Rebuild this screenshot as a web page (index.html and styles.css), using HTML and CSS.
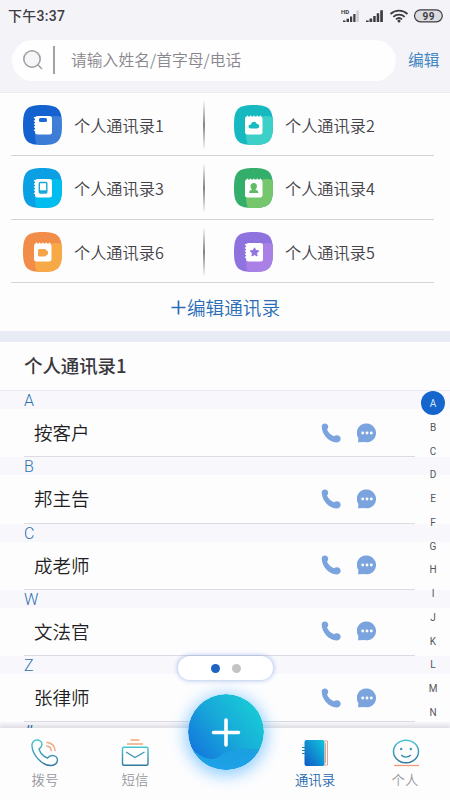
FILE: index.html
```html
<!DOCTYPE html>
<html lang="zh-CN">
<head>
<meta charset="utf-8">
<title>通讯录</title>
<link rel="stylesheet" href="styles.css">
</head>
<body>
<svg class="defs" width="0" height="0" aria-hidden="true">
  <defs>
    <clipPath id="tile"><path d="M19.5 0C35 0 39 4 39 20S35 40 19.5 40 0 36 0 20 4 0 19.5 0Z"/></clipPath>
    <linearGradient id="shade" x1="1" y1="0" x2="0" y2="1"><stop offset="0" stop-color="#fff" stop-opacity=".2"/><stop offset="1" stop-color="#fff" stop-opacity=".15"/></linearGradient>
    <linearGradient id="line" x1="0" y1="0" x2="0" y2="1"><stop offset="0" stop-color="#45c5cf"/><stop offset="1" stop-color="#32799f"/></linearGradient>
    <linearGradient id="book" x1="1" y1="0" x2="0" y2="1"><stop offset="0" stop-color="#11c6dc"/><stop offset="1" stop-color="#1059c6"/></linearGradient>
    <linearGradient id="fab" x1=".85" y1=".15" x2=".1" y2=".75"><stop offset="0" stop-color="#18c8d6"/><stop offset=".5" stop-color="#18a8d9"/><stop offset="1" stop-color="#147bdc"/></linearGradient>
    <linearGradient id="wave" x1="0" y1="0" x2="0" y2="1"><stop offset="0" stop-color="#1a9fdd"/><stop offset="1" stop-color="#1da3ea"/></linearGradient>
    <symbol id="side-book" viewBox="0 0 39 40">
      <rect x="12" y="11" width="17" height="18.5" rx="2.5" fill="#fff"/>
      <path d="M11.500 12.800h2M11.500 15.900h2M11.500 19h2M11.500 22.100h2M11.500 25.200h2" stroke="#fff" stroke-width="1.500" stroke-linecap="round"/>
    </symbol>
    <symbol id="top-book" viewBox="0 0 39 40">
      <rect x="11" y="11.5" width="17.5" height="18" rx="2.3" fill="#fff"/>
      <path d="M13.300 11.200v2M16.600 11.200v2M19.900 11.200v2M23.200 11.200v2M26.500 11.200v2" stroke="#fff" stroke-width="1.400" stroke-linecap="round"/>
    </symbol>
    <symbol id="phone" viewBox="0 0 20 20"><path d="M.7 3.600C.7 1.700 2.100.5 3.900.5c1.900 0 3.300 1.400 3.300 3.200 0 1.300-.7 2.100-1.200 2.900 1.100 2.700 3.700 5.400 6.900 6.700.9-.6 1.900-1 3.100-1 2.100 0 3.700 1.600 3.700 3.500 0 2.200-1.900 3.700-4.300 3.700C8 19.500.9 11.700.7 3.600Z"/></symbol>
    <symbol id="chat" viewBox="0 0 20 20"><path d="M10 .6a9.300 9.300 0 1 1-2.600 18.300l-5.600.4q-.8 0-.7-.8l.3-3.500A9.300 9.300 0 0 1 10 .6Z"/><g fill="#fff"><circle cx="5.700" cy="10" r="1.450"/><circle cx="10" cy="10" r="1.450"/><circle cx="14.300" cy="10" r="1.450"/></g></symbol>
  </defs>
</svg>
<div class="app">
  <header class="header">
    <div class="status">
      <span class="time">下午3:37</span>
      <svg class="signals" width="104" height="16" viewBox="0 0 104 16">
        <g fill="#3d3c42"><path d="M2 12.500h2.500V14H2zM5.500 10.800H8V14H5.500zM9 8.500h2.200V14H9zM12.300 6h2.200v8h-2.200z"/><path d="M15.500 2.500h2.200V14h-2.200z" fill="#c9c8cd"/><path d="M25 12.500h2.700V14H25zM28.500 10.500h2.700V14h-2.700zM32.200 8h2.500v6h-2.500zM35.700 5.300h2.500V14h-2.500zM39.200 2.300h2.700V14h-2.700z"/></g>
        <text x="0" y="5.500" class="hd">HD</text>
        <g fill="none" stroke="#3d3c42" stroke-width="1.800"><path d="M49.500 6a12.500 12.500 0 0 1 17 0M52.300 8.800a8.500 8.500 0 0 1 11.400 0M55 11.400a4.500 4.500 0 0 1 6 0"/></g><circle cx="58" cy="13" r="1.500" fill="#3d3c42"/>
        <rect x="73.500" y="1.800" width="27.800" height="12" rx="6" fill="#dcdbe0" stroke="#3d3c42" stroke-width="1.200"/>
        <text x="87.700" y="11.500" text-anchor="middle" class="battery">99</text>
      </svg>
    </div>
    <div class="search-row">
      <div class="search">
        <svg width="20" height="20" viewBox="0 0 20 20" fill="#f6f6f8" stroke="#a09fa3" stroke-width="1.600"><circle cx="9" cy="9" r="8.200"/><path d="M14.500 14.500l4.500 4.500"/></svg>
        <i class="bar"></i>
        <span>请输入姓名/首字母/电话</span>
      </div>
      <a class="edit">编辑</a>
    </div>
  </header>

  <section class="books">
    <div class="book-row">
      <div class="book"><svg class="tile" viewBox="0 0 39 40"><g clip-path="url(#tile)"><path fill="#1462cf" d="M0 0h39v40H0z"/><circle cx="32" cy="31" r="20" fill="url(#shade)"/></g><use href="#side-book"/><rect x="16" y="13" width="8" height="4" rx="1.500" fill="#1d68d2"/></svg><span>个人通讯录1</span></div>
      <i class="split"></i>
      <div class="book"><svg class="tile" viewBox="0 0 39 40"><g clip-path="url(#tile)"><path fill="#16b9bf" d="M0 0h39v40H0z"/><circle cx="32" cy="31" r="20" fill="#3cd0c8"/></g><use href="#top-book"/><path d="M17 23.500c-3.300 0-3.300-4 0-4.100.8-3.700 5.300-3.100 5.800-.5 3.200-.2 3.200 4.600.2 4.600Z" fill="#18bbc1"/></svg><span>个人通讯录2</span></div>
    </div>
    <div class="book-row">
      <div class="book"><svg class="tile" viewBox="0 0 39 40"><g clip-path="url(#tile)"><path fill="#0b9fe3" d="M0 0h39v40H0z"/><circle cx="32" cy="31" r="20" fill="#00bdf0"/></g><use href="#side-book"/><rect x="16.300" y="14.500" width="7.500" height="10.500" rx="1" fill="#fff" stroke="#13a9dd" stroke-width="1.400"/><path d="M16.500 22.300h7.200v2.500h-7.200z" fill="#13a9dd"/></svg><span>个人通讯录3</span></div>
      <i class="split"></i>
      <div class="book"><svg class="tile" viewBox="0 0 39 40"><g clip-path="url(#tile)"><path fill="#34af6b" d="M0 0h39v40H0z"/><circle cx="32" cy="31" r="20" fill="#75c66c"/></g><use href="#top-book"/><path d="M15 25c0-2.300 1.300-3 3-3.300-2.800-2.800-1.500-6.700 1.700-6.700s4.500 3.900 1.700 6.700c1.700.3 3 1 3 3.300Z" fill="#62bc66"/></svg><span>个人通讯录4</span></div>
    </div>
    <div class="book-row">
      <div class="book"><svg class="tile" viewBox="0 0 39 40"><g clip-path="url(#tile)"><path fill="#f28d49" d="M0 0h39v40H0z"/><circle cx="32" cy="31" r="20" fill="#f7a947"/></g><use href="#top-book"/><path d="M16.500 17h5.500l3 2.500v2.500l-3 2.500h-5.500q-1.500 0-1.500-1.500v-4.500q0-1.500 1.500-1.500Z" fill="#f5a448"/></svg><span>个人通讯录6</span></div>
      <i class="split"></i>
      <div class="book"><svg class="tile" viewBox="0 0 39 40"><g clip-path="url(#tile)"><path fill="#8e73df" d="M0 0h39v40H0z"/><circle cx="32" cy="31" r="20" fill="#a980e5"/></g><use href="#side-book"/><path d="M20.500 15.800l1.300 2.700 3 .4-2.200 2.100.5 3-2.600-1.400-2.600 1.400.5-3-2.200-2.100 3-.4Z" fill="#9274df" stroke="#9274df" stroke-linejoin="round"/></svg><span>个人通讯录5</span></div>
    </div>
    <a class="manage"><svg width="15" height="15" viewBox="0 0 15 15" stroke="#2a6cb5" stroke-width="1.700"><path d="M7.500 .5v14M.5 7.500h14"/></svg><span>编辑通讯录</span></a>
  </section>

  <main class="contacts">
    <h1>个人通讯录1</h1>
    <div class="list">
      <div class="group"><div class="letter">A</div><div class="contact"><span>按客户</span><svg><use href="#phone"/></svg><svg><use href="#chat"/></svg></div></div>
      <div class="group"><div class="letter">B</div><div class="contact"><span>邦主告</span><svg><use href="#phone"/></svg><svg><use href="#chat"/></svg></div></div>
      <div class="group"><div class="letter">C</div><div class="contact"><span>成老师</span><svg><use href="#phone"/></svg><svg><use href="#chat"/></svg></div></div>
      <div class="group"><div class="letter">W</div><div class="contact"><span>文法官</span><svg><use href="#phone"/></svg><svg><use href="#chat"/></svg></div></div>
      <div class="group"><div class="letter">Z</div><div class="contact"><span>张律师</span><svg><use href="#phone"/></svg><svg><use href="#chat"/></svg></div></div>
      <div class="group"><div class="letter last">#</div></div>
      <div class="index"><b>A</b><span>B</span><span>C</span><span>D</span><span>E</span><span>F</span><span>G</span><span>H</span><span>I</span><span>J</span><span>K</span><span>L</span><span>M</span><span>N</span></div>
    </div>
  </main>

  <nav class="tabs">
    <div class="pager"><i class="on"></i><i></i></div>
    <a class="tab"><svg width="30" height="30" viewBox="0 0 30 30" fill="none" stroke-linecap="round"><path d="M2 8C1.600 4.500 4 2 7 2c2.800 0 5 2 5 4.500S10 10 9 11c1.500 4.500 4.500 7.700 8.500 9 1.200-1.500 2.700-2.500 4.800-2.500 3 0 5.200 2 5.200 4.600 0 3.500-3.500 5.400-7 5.400C12 27.500 2.500 17 2 8Z" stroke="url(#line)" stroke-width="1.400"/><path d="M17 4.500c4.500.4 7.700 3.500 8 8M16.800 8c2.700.3 4.200 2 4.500 4.500" stroke="#efab83" stroke-width="1.500"/></svg><span>拨号</span></a>
    <a class="tab"><svg width="30" height="30" viewBox="0 0 30 30" fill="none"><path d="M10.500 2h9M7 6h16" stroke="#efa878" stroke-width="1.300"/><rect x="2.500" y="9.200" width="25.500" height="18" rx="1.500" stroke="url(#line)" stroke-width="1.400"/><path d="M6 14l9 5.500 9.500-5.500" stroke="#3c96ad" stroke-width="1.300"/></svg><span>短信</span></a>
    <a class="tab"></a>
    <a class="tab active"><svg width="30" height="30" viewBox="0 0 30 30" fill="none"><path d="M24 3h3.500v24H24M25.500 5v20" stroke="#efa184" stroke-width="1"/><rect x="4.500" y="2" width="20" height="26" rx="2" fill="url(#book)"/><path d="M2 9.500h3.500M2 12.500h3.500M2 15.500h3.500" stroke="#228dab" stroke-width="1.200"/></svg><span>通讯录</span></a>
    <a class="tab"><svg width="30" height="30" viewBox="0 0 30 30" fill="none"><ellipse cx="16" cy="13.500" rx="12.500" ry="11.300" stroke="url(#line)" stroke-width="1.500"/><path d="M11.200 17c2.300 2.700 7.300 2.700 9.600 0" stroke="#3a8fae" stroke-width="1.300"/><circle cx="11.200" cy="11" r="1.200" fill="#3a9ab2"/><circle cx="20.800" cy="11" r="1.200" fill="#3a9ab2"/><path d="M4 27.500h25" stroke="#ee9d78" stroke-width="1.300"/></svg><span>个人</span></a>
    <svg class="fab" viewBox="0 0 76 76"><clipPath id="disc"><circle cx="38" cy="38" r="38"/></clipPath><g clip-path="url(#disc)"><path fill="url(#fab)" d="M0 0h76v76H0z"/><path d="M0 52c8 7 16 13 24 13 10-1 14-8 28-10 10-1 16 1 24 0v21H0Z" fill="url(#wave)"/><path d="M28 64c6-5 12-9 22-6 10 3 18 1 26-2v20H28Z" fill="#1d9fe6" opacity=".5"/></g><path d="M38 26v25M25.500 38.500h25" stroke="#fff" stroke-width="3.600" stroke-linecap="round"/></svg>
  </nav>
</div>
</body>
</html>
```
FILE: styles.css
```css
* { box-sizing: border-box; }
body {
  margin: 0;
  font-family: Roboto, "Noto Sans CJK SC", sans-serif;
  background: #fdfdfe;
}
.defs { position: absolute; }
.app {
  position: relative;
  width: 450px;
  height: 800px;
  display: flex;
  flex-direction: column;
  overflow: hidden;
}
i { font-style: normal; }

.header {
  height: 93px;
  flex: none;
  background: #f4f3f7;
  border-bottom: 1px solid #ebeaef;
}
.status {
  height: 40px;
  padding: 0 5px 9px 8px;
  display: flex;
  align-items: center;
  justify-content: space-between;
}
.time {
  font: 500 14px/20px Roboto, "Noto Sans CJK SC", sans-serif;
  color: #3d3c42;
  letter-spacing: .3px;
}
.hd { font: 700 6px Roboto, sans-serif; fill: #3d3c42; }
.battery { font: 700 10px Roboto, sans-serif; fill: #3d3c42; letter-spacing: .5px; }
.search-row { display: flex; align-items: center; padding-left: 12px; }
.search {
  width: 384px;
  height: 41px;
  border-radius: 21px;
  background: #fefefe;
  display: flex;
  align-items: center;
  padding: 0 0 1px 11px;
  font: 350 15.8px/24px "Noto Sans CJK SC", sans-serif;
  color: #89878d;
}
.search .bar { width: 1.5px; height: 28px; background: #a3a2a6; margin: 0 16.5px 0 10px; }
.edit { margin-left: 12px; padding-bottom: 1px; font: 400 15.7px/24px "Noto Sans CJK SC", sans-serif; color: #4387c2; }

.books { height: 238px; flex: none; padding-left: 11px; }
.book-row {
  width: 423px;
  height: 63.5px;
  padding-top: 1.5px;
  border-bottom: 1px solid #d5d3da;
  display: flex;
  align-items: center;
}
.book-row:first-child { height: 63px; }
.book {
  flex: none;
  display: flex;
  align-items: center;
  gap: 12px;
  width: 192px;
  padding-left: 12px;
  font: 350 16.2px/24px "Noto Sans CJK SC", sans-serif;
  color: #454348;
}
.tile { width: 39px; height: 40px; }
.split {
  width: 2px;
  height: 50px;
  margin-right: 17px;
  background: linear-gradient(#fdfdfe, #858388 50%, #fdfdfe);
}
.manage {
  height: 48px;
  padding-left: 6px;
  display: flex;
  width: 423px;
  align-items: center;
  justify-content: center;
  gap: 1px;
  font: 350 18.6px/24px "Noto Sans CJK SC", sans-serif;
  color: #2a6cb5;
}
.manage span { padding-bottom: 1px; }

.contacts {
  border-top: 11px solid #e8ebf4;
  flex: 1;
  min-height: 0;
}
h1 {
  height: 48px;
  margin: 0;
  padding-left: 24px;
  font: 500 18.5px/46px "Noto Sans CJK SC", sans-serif;
  letter-spacing: -.1px;
  color: #39383d;
}
.list { position: relative; border-top: 1px solid #ebeaf1; }
.group { height: 66.25px; }
.letter {
  height: 18px;
  padding-left: 24px;
  background: #f8f8fc;
  font-size: 16px;
  font-weight: 300;
  line-height: 19px;
  color: #2f70ae;
}
.letter.last { font-weight: 500; }
.contact {
  width: 391px;
  height: 48.25px;
  margin-left: 24px;
  padding: 0 38px 0 10px;
  border-bottom: 1px solid #dcdbe3;
  display: flex;
  align-items: center;
  gap: 16px;
  font: 350 18.5px/24px "Noto Sans CJK SC", sans-serif;
  color: #1f1e22;
}
.contact span { flex: 1; padding-bottom: 1px; }
.contact svg { width: 20px; height: 20px; fill: #7ba4df; }
.index {
  position: absolute;
  top: 0;
  right: 5px;
  width: 24px;
  display: grid;
  grid-auto-rows: 23.75px;
  font-size: 10px;
  line-height: 26px;
  text-align: center;
  color: #555459;
}
.index b {
  width: 24px;
  height: 24px;
  border-radius: 50%;
  font-weight: 400;
  color: #d7e5f8;
  background: #1565cd;
}

.tabs {
  position: relative;
  height: 72px;
  flex: none;
  background: #fdfdfe;
  display: flex;
  box-shadow: 0 -2px 4px 1px rgba(80, 78, 90, .15);
}
.tab {
  flex: 1;
  display: flex;
  flex-direction: column;
  align-items: center;
  padding-top: 10px;
  gap: 1px;
  font: 350 13.4px/20px "Noto Sans CJK SC", sans-serif;
  color: #98979c;
}
.tab.active { color: #2769ac; }
.fab {
  position: absolute;
  left: 187.5px;
  top: -34px;
  width: 76px;
  height: 76px;
  border-radius: 50%;
  box-shadow: 0 3px 15px 3px rgba(38, 160, 255, .48);
}
.pager {
  position: absolute;
  left: 178px;
  top: -72px;
  width: 95px;
  height: 24px;
  border-radius: 12px;
  background: #fff;
  box-shadow: 0 0 4px 1px rgba(80, 125, 215, .4);
  display: flex;
  align-items: center;
  justify-content: center;
  gap: 12px;
}
.pager i { width: 9px; height: 9px; border-radius: 50%; background: #c4c4c7; }
.pager .on { background: #1e63c3; }
```
